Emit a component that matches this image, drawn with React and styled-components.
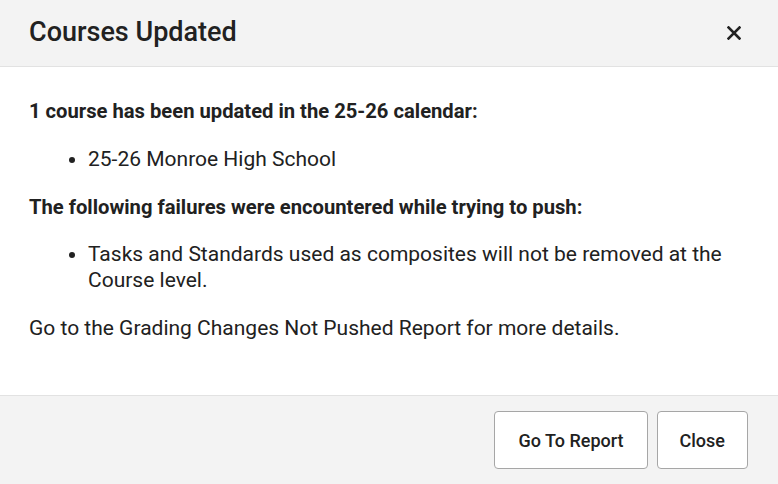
import React from 'react';
import styled, { createGlobalStyle } from 'styled-components';

const GlobalStyle = createGlobalStyle`
  html, body {
    margin: 0;
    padding: 0;
    background: #ffffff;
  }

  body {
    font-family: Roboto, "Liberation Sans", sans-serif;
    color: #212121;
  }
`;

const Dialog = styled.div`
  display: flex;
  flex-direction: column;
  width: 778px;
  height: 484px;
  background: #ffffff;
`;

const Header = styled.div`
  display: flex;
  align-items: center;
  justify-content: space-between;
  height: 66px;
  padding: 0 34px 0 29px;
  background: #f3f3f3;
  border-bottom: 1px solid #e2e2e2;
`;

const Title = styled.h2`
  margin: 0 0 2px;
  font-size: 27px;
  font-weight: 500;
  color: #212121;
`;

const CloseIcon = styled.button`
  display: flex;
  align-items: center;
  justify-content: center;
  width: 20px;
  height: 20px;
  padding: 0;
  border: none;
  background: transparent;
  cursor: pointer;
`;

const Body = styled.div`
  flex: 1;
  padding: 31px 29px 0;
`;

const Lead = styled.p`
  margin: 0 0 ${({ $gap }) => $gap}px;
  font-size: ${({ $bold }) => ($bold ? 20.2 : 21)}px;
  line-height: 26px;
  font-weight: ${({ $bold }) => ($bold ? 700 : 400)};
`;

const List = styled.ul`
  margin: 0 0 22px;
  padding: 0 20px 0 59px;
  font-size: 21px;
  line-height: 26px;
`;

const Footer = styled.div`
  display: flex;
  justify-content: flex-end;
  gap: 9px;
  height: 89px;
  box-sizing: border-box;
  padding: 15px 30px 0;
  background: #f3f3f3;
  border-top: 1px solid #e2e2e2;
`;

const Button = styled.button`
  height: 58px;
  padding: 0 ${({ $pad }) => $pad}px;
  border: 1px solid #a6a6a6;
  border-radius: 4px;
  background: #ffffff;
  font-family: Roboto, "Liberation Sans", sans-serif;
  font-size: 18px;
  font-weight: 500;
  color: #212121;
  cursor: pointer;
`;

const App = () => (
  <>
    <GlobalStyle />
    <Dialog>
      <Header>
        <Title>Courses Updated</Title>
        <CloseIcon aria-label="Close">
          <svg width="14" height="14" viewBox="0 0 14 14">
            <path d="M1.5 1.5 L12.5 12.5 M12.5 1.5 L1.5 12.5" stroke="#222" strokeWidth="2.6" strokeLinecap="square" />
          </svg>
        </CloseIcon>
      </Header>

      <Body>
        <Lead $bold $gap={22}>1 course has been updated in the 25-26 calendar:</Lead>
        <List>
          <li>25-26 Monroe High School</li>
        </List>
        <Lead $bold $gap={21}>The following failures were encountered while trying to push:</Lead>
        <List>
          <li>Tasks and Standards used as composites will not be removed at the Course level.</li>
        </List>
        <Lead $gap={0}>Go to the Grading Changes Not Pushed Report for more details.</Lead>
      </Body>

      <Footer>
        <Button $pad={23}>Go To Report</Button>
        <Button $pad={22}>Close</Button>
      </Footer>
    </Dialog>
  </>
);

export default App;
